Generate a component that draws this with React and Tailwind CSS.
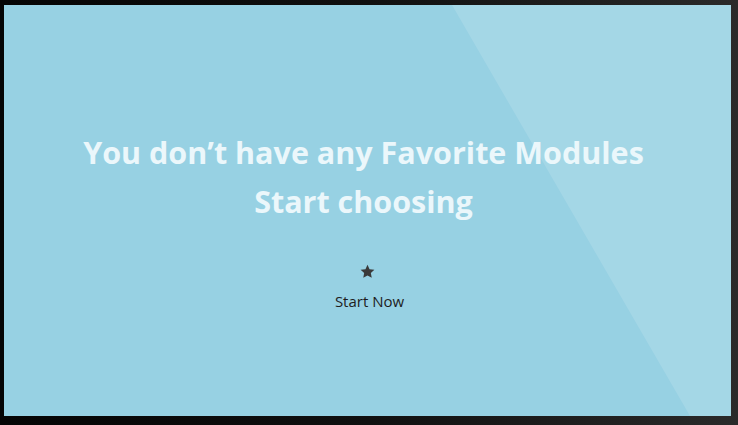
//EmptyFavorites
const EmptyFavorites = () => {
  return (
    <div className="w-[738px] h-[425px] bg-gradient-to-r from-[#050505] via-[#101010] to-[#2a2a2a] pt-[5px] pl-[4px] pr-[7px] pb-[9px]">
      <div className="relative h-full w-full overflow-hidden bg-[#97d1e3]">
        {/* glare */}
        <svg
          className="absolute inset-0 h-full w-full"
          viewBox="0 0 727 411"
          preserveAspectRatio="none"
        >
          <polygon points="448,0 727,0 727,411 686,411" fill="#ffffff" fillOpacity="0.13" />
        </svg>

        <div className="relative flex h-full flex-col items-center pt-[123px] font-['Open_Sans',sans-serif]">
          <h1 className="mr-2 text-center text-[30.5px] font-bold leading-[49px] text-[#ebf7fb]">
            You don’t have any Favorite Modules
            <br />
            Start choosing
          </h1>
          <svg className="mt-[37px] h-[17px] w-[17px]" viewBox="0 0 24 24">
            <path
              d="M12 2.5l2.9 6.2 6.8.8-5 4.6 1.3 6.7L12 17.5l-6 3.3 1.3-6.7-5-4.6 6.8-.8z"
              fill="#3a3a3a"
            />
          </svg>
          <span className="ml-1 mt-[11px] text-[15px] leading-[20px] text-[#1e1e1e]">Start Now</span>
        </div>
      </div>
    </div>
  );
};

export default EmptyFavorites;
